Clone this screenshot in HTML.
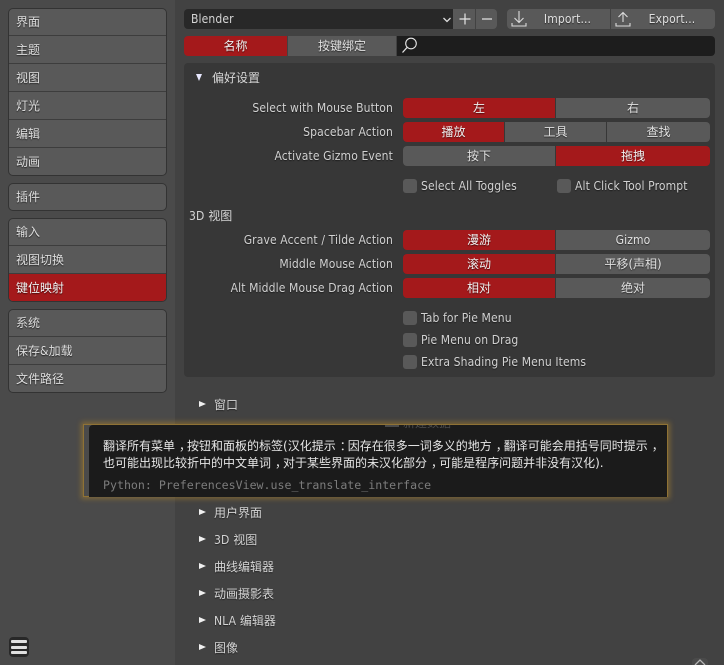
<!DOCTYPE html>
<html><head><meta charset="utf-8">
<style>
html,body{margin:0;padding:0;width:724px;height:665px;overflow:hidden;background:#424242}
*{box-sizing:border-box}
body{position:relative;font-family:"DejaVu Sans","WenQuanYi Zen Hei","Noto Sans CJK SC",sans-serif;font-size:12px;color:#d9d9d9}
.a{position:absolute}
.b{position:absolute;height:20px;line-height:20px;text-align:center;background:#595959;color:#e0e0e0;text-shadow:0 1px 1px rgba(0,0,0,.55);white-space:nowrap}
.r{background:#a4191b;color:#f0f0f0}
.l{border-radius:4px 0 0 4px}.e{border-radius:0 4px 4px 0}
.s,.lab,.ct{font-family:"DejaVu Sans Condensed","DejaVu Sans",sans-serif;font-size:12px;font-stretch:condensed;letter-spacing:.12px}
.side{position:absolute;left:8px;width:159px;background:#595959;border:1px solid #333;border-radius:5px;overflow:hidden}
.side div{height:28px;line-height:29px;padding-left:7px;border-bottom:1px solid #3d3d3d;color:#dedede;text-shadow:0 1px 1px rgba(0,0,0,.6)}
.side div:first-child{height:27px;line-height:27px}
.side div:last-child{border-bottom:0}
.lab{position:absolute;right:331px;height:20px;line-height:20px;color:#d2d2d2;white-space:nowrap;text-shadow:0 1px 1px rgba(0,0,0,.5)}
.cb{position:absolute;width:14px;height:14px;background:#595959;border-radius:3px}
.ct{position:absolute;height:16px;line-height:16px;color:#d2d2d2;white-space:nowrap;text-shadow:0 1px 1px rgba(0,0,0,.5)}
.tri{position:absolute;left:199px;width:0;height:0;border-left:7px solid #f0f0f0;border-top:3.5px solid transparent;border-bottom:3.5px solid transparent}
.hd{position:absolute;left:214px;height:18px;line-height:18px;color:#d5d5d5;white-space:nowrap;text-shadow:0 1px 1px rgba(0,0,0,.5)}
i{font-style:normal;position:relative;left:4px}
</style></head><body>
<div class="a" style="left:0;top:0;width:175px;height:665px;background:#4a4a4a"></div>

<div class="side" style="top:8px;height:168px"><div>界面</div><div>主题</div><div>视图</div><div>灯光</div><div>编辑</div><div>动画</div></div>
<div class="side" style="top:183px;height:28px"><div style="height:26px;line-height:26px">插件</div></div>
<div class="side" style="top:218px;height:84px"><div>输入</div><div>视图切换</div><div style="background:#a4191b;color:#f2f2f2">键位映射</div></div>
<div class="side" style="top:309px;height:84px"><div>系统</div><div>保存<span class="s">&amp;</span>加载</div><div>文件路径</div></div>

<div class="a s" style="left:184px;top:9px;width:269px;height:20px;background:#282828;border-radius:4px 0 0 4px;padding-left:7px;line-height:20px;color:#d5d5d5">Blender</div>
<svg class="a" style="left:442px;top:16px" width="10" height="8"><path d="M1.5 2 L5 5.500 L8.500 2" fill="none" stroke="#ddd" stroke-width="1.300"/></svg>
<div class="b" style="left:453px;top:9px;width:22px;background:#595959"></div>
<div class="b e" style="left:476px;top:9px;width:21px;background:#595959"></div>
<svg class="a" style="left:453px;top:9px" width="44" height="20"><path d="M12 4.500V15.500M6.500 10H17.500" stroke="#e6e6e6" stroke-width="1.200"/><path d="M29 10H39" stroke="#e6e6e6" stroke-width="1.200"/></svg>

<div class="b l s" style="left:507px;top:9px;width:103px;padding-left:18px">Import...</div>
<div class="b e s" style="left:611px;top:9px;width:104px;padding-left:18px">Export...</div>
<svg class="a" style="left:507px;top:9px" width="208" height="20"><g fill="none" stroke="#dcdcdc" stroke-width="1.100"><path d="M12 2V13.500M7.500 9L12 13.500L16.500 9M5 14V17H19V14"/><path d="M116 13V3.500M111.500 8L116 3.500L120.500 8M109 14V17H123V14"/></g></svg>

<div class="b r l" style="left:184px;top:36px;width:103px">名称</div>
<div class="b" style="left:288px;top:36px;width:108px">按键绑定</div>
<div class="a" style="left:397px;top:36px;width:318px;height:20px;background:#1d1d1d;border-radius:0 4px 4px 0"></div>
<svg class="a" style="left:400px;top:36px" width="20" height="20"><circle cx="11" cy="7.500" r="5.300" fill="none" stroke="#e6e6e6" stroke-width="1.100"/><path d="M7 11.500L2.500 16.500" stroke="#e6e6e6" stroke-width="1.300"/></svg>

<div class="a" style="left:184px;top:63px;width:531px;height:314px;background:#373737;border-radius:4px"></div>
<div class="a" style="left:196px;top:74px;width:0;height:0;border-top:7px solid #e8e8ff;border-left:3.500px solid transparent;border-right:3.500px solid transparent"></div>
<div class="a" style="left:212px;top:69px;height:18px;line-height:18px;color:#d5d5d5">偏好设置</div>

<div class="lab" style="top:98px">Select with Mouse Button</div>
<div class="b r l" style="left:403px;top:98px;width:152px">左</div>
<div class="b e" style="left:556px;top:98px;width:154px">右</div>
<div class="lab" style="top:122px">Spacebar Action</div>
<div class="b r l" style="left:403px;top:122px;width:101px">播放</div>
<div class="b" style="left:505px;top:122px;width:101px">工具</div>
<div class="b e" style="left:607px;top:122px;width:103px">查找</div>
<div class="lab" style="top:146px">Activate Gizmo Event</div>
<div class="b l" style="left:403px;top:146px;width:152px">按下</div>
<div class="b r e" style="left:556px;top:146px;width:154px">拖拽</div>

<div class="cb" style="left:403px;top:179px"></div><div class="ct" style="left:421px;top:178px">Select All Toggles</div>
<div class="cb" style="left:557px;top:179px"></div><div class="ct" style="left:575px;top:178px">Alt Click Tool Prompt</div>

<div class="a" style="left:189px;top:207px;height:18px;line-height:18px;color:#d5d5d5"><span class="s">3D</span> 视图</div>

<div class="lab" style="top:230px">Grave Accent / Tilde Action</div>
<div class="b r l" style="left:403px;top:230px;width:152px">漫游</div>
<div class="b e s" style="left:556px;top:230px;width:154px">Gizmo</div>
<div class="lab" style="top:254px">Middle Mouse Action</div>
<div class="b r l" style="left:403px;top:254px;width:152px">滚动</div>
<div class="b e" style="left:556px;top:254px;width:154px">平移(声相)</div>
<div class="lab" style="top:278px">Alt Middle Mouse Drag Action</div>
<div class="b r l" style="left:403px;top:278px;width:152px">相对</div>
<div class="b e" style="left:556px;top:278px;width:154px">绝对</div>

<div class="cb" style="left:403px;top:311px"></div><div class="ct" style="left:421px;top:310px">Tab for Pie Menu</div>
<div class="cb" style="left:403px;top:333px"></div><div class="ct" style="left:421px;top:332px">Pie Menu on Drag</div>
<div class="cb" style="left:403px;top:355px"></div><div class="ct" style="left:421px;top:354px">Extra Shading Pie Menu Items</div>

<div class="tri" style="top:401px"></div><div class="hd" style="top:396px">窗口</div>
<div class="tri" style="top:509px"></div><div class="hd" style="top:504px">用户界面</div>
<div class="tri" style="top:536px"></div><div class="hd" style="top:531px"><span class="s">3D</span> 视图</div>
<div class="tri" style="top:563px"></div><div class="hd" style="top:558px">曲线编辑器</div>
<div class="tri" style="top:590px"></div><div class="hd" style="top:585px">动画摄影表</div>
<div class="tri" style="top:617px"></div><div class="hd" style="top:612px"><span class="s">NLA</span> 编辑器</div>
<div class="tri" style="top:644px"></div><div class="hd" style="top:639px">图像</div>

<!-- tooltip -->
<div class="a" style="left:83px;top:424px;width:585px;height:73px;border:1px solid #8f7235;box-shadow:0 0 5px 2px rgba(190,140,40,.45);background:transparent"></div>
<div class="a" style="left:89px;top:425px;width:578px;height:72px;background:#1b1b1b;border-radius:4px 0 0 0;overflow:hidden">
<div class="a" style="left:14px;top:13px;line-height:17px;color:#e6e6e6;white-space:nowrap;font-size:12px">翻译所有菜单<i>，</i>按钮和面板的标签(汉化提示<i>：</i>因存在很多一词多义的地方<i>，</i>翻译可能会用括号同时提示<i>，</i><br>也可能出现比较折中的中文单词<i>，</i>对于某些界面的未汉化部分<i>，</i>可能是程序问题并非没有汉化).</div>
<div class="a" style="left:14px;top:52px;color:#7c7c7c;white-space:nowrap;font:11.6px/17px 'DejaVu Sans Mono',monospace">Python: PreferencesView.use_translate_interface</div>
<div class="a" style="left:296px;top:0;width:14px;height:2px;background:#4a4a4a"></div>
<div class="a" style="left:314px;top:-9px;height:14px;line-height:14px;color:#4a4a4a">新建数据</div>
</div>

<div class="a" style="left:9px;top:637px;width:20px;height:20px;background:#282828;border-radius:4px"></div>
<div class="a" style="left:11px;top:640px;width:16px;height:3px;background:#e0e0e0;border-radius:1px"></div>
<div class="a" style="left:11px;top:645.500px;width:16px;height:3px;background:#e0e0e0;border-radius:1px"></div>
<div class="a" style="left:11px;top:651px;width:16px;height:3px;background:#e0e0e0;border-radius:1px"></div>

<div class="a" style="left:692px;top:658px;width:16px;height:7px;background:#4a4a4a;border-radius:4px 4px 0 0"></div>
<svg class="a" style="left:692px;top:657px" width="16" height="8"><path d="M3 8L8 3L13 8" fill="none" stroke="#b5b5b5" stroke-width="1.300"/></svg>
</body></html>
